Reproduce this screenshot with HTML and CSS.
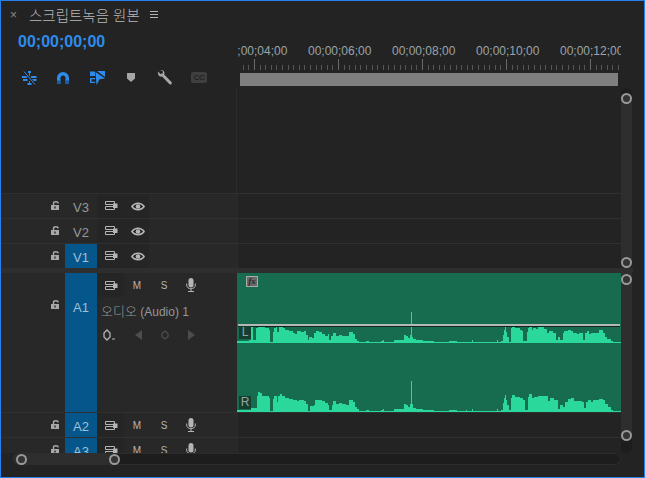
FILE: index.html
```html
<!DOCTYPE html>
<html lang="ko">
<head>
<meta charset="utf-8">
<title>스크립트녹음 원본</title>
<link rel="stylesheet" href="styles.css">
</head>
<body>
<svg class="defs" width="0" height="0">
  <defs>
    <symbol id="lock" viewBox="0 0 9 9"><path d="M2.500 4V2.200C2.500 .4 7 .2 7.200 2.400" fill="none" stroke="currentColor" stroke-width="1.400"/><path fill-rule="evenodd" d="M0 4h8v5H0zM3.300 5.500v2h1.400v-2z" fill="currentColor"/></symbol>
    <symbol id="sync" viewBox="0 0 13 9"><path d="M.5.5h9v3h-9zM.5 5.500h9v3h-9z" fill="none" stroke="currentColor"/><path d="M8 2.500h4.500v4.500H8z" fill="currentColor"/></symbol>
    <symbol id="eye" viewBox="0 0 14 9"><path d="M.8 4.500C4 .2 10 .2 13.200 4.500 10 8.800 4 8.800 .8 4.500z" fill="none" stroke="currentColor" stroke-width="1.400"/><circle cx="7" cy="4.500" r="2.300" fill="currentColor"/></symbol>
    <symbol id="mic" viewBox="0 0 10 14"><rect x="2.500" y="0" width="5" height="9.500" rx="2.500" fill="currentColor"/><path d="M.7 5.500v1.500c0 5 8.600 5 8.600 0V5.500M5 11v2.500M2 13.500h6" fill="none" stroke="currentColor"/></symbol>
  </defs>
</svg>
<main class="panel">
  <header class="tabbar">
    <span class="tab-close">×</span>
    <span class="tab-title">스크립트녹음 원본</span>
    <span class="tab-menu"><i></i><i></i><i></i></span>
  </header>

  <section class="top">
    <div class="controls">
      <div class="timecode">00;00;00;00</div>
      <div class="tools">
        <svg class="tool t-nest" viewBox="0 0 15 14"><path d="M6 0h3v2H6zM7 2h1v3H7zM0 5h5v2H0zM9 5h5.500v2H9zM1 8h4.500v2H1zM10 8h4.500v2H10zM7 10h1v2H7zM5.500 12h4v2h-4z" fill="#2d8ceb"/><path d="M1.500 0l12 14" stroke="#232323" stroke-width="2.600"/><path d="M2 .5l11 13" stroke="#2d8ceb" stroke-width="1"/></svg>
        <svg class="tool t-magnet" viewBox="0 0 12 12"><path d="M0 12V6a6 6 0 0 1 12 0v6H8.500V6a2.500 2.500 0 0 0-5 0v6z" fill="#2d8ceb"/><path d="M0 8.500h3.500V12H0zM8.500 8.500H12V12H8.500z" fill="#1b5c9e"/></svg>
        <svg class="tool t-link" viewBox="0 0 15 14"><path d="M0 .5h5v4.500H0zM0 7h5v1.200H1.500v2.600H5V12H0zM7 0h8v6zM5.500 1l9.500 6.500-5.500.7-3 5.800z" fill="#2d8ceb"/></svg>
        <svg class="tool t-marker" viewBox="0 0 8 9"><path d="M0 0h8v5.500L4 9 0 5.500z" fill="#a6a6a6"/></svg>
        <svg class="tool t-wrench" viewBox="0 0 15 15"><path d="M1 1.500 3.500 4l2-.5.500-2L3.500 0C5.500-.4 7.500 1 7.500 3c0 .6-.1 1-.3 1.400L14.500 12a1.500 1.500 0 0 1-2 2.200L5 6.600C3 7.300.4 5.500 1 1.500z" fill="#a6a6a6"/></svg>
        <span class="tool-cc">CC</span>
      </div>
    </div>
    <div class="ruler">
      <div class="ruler-labels">
        <span>00;00;04;00</span><span>00;00;06;00</span><span>00;00;08;00</span><span>00;00;10;00</span><span>00;00;12;00</span>
      </div>
      <div class="ruler-ticks"></div>
      <div class="zoombar"></div>
    </div>
  </section>

  <section class="stack stack-video">
    <div class="tracks">
      <div class="empty"><div class="empty-head"></div></div>
      <div class="row">
        <div class="head">
          <div class="lock-cell"><svg class="ic-lock"><use href="#lock"/></svg></div>
          <div class="target">V3</div>
          <div class="btns btns-video"><svg class="ic-sync"><use href="#sync"/></svg><svg class="ic-eye"><use href="#eye"/></svg></div>
        </div>
        <div class="lane"></div>
      </div>
      <div class="row">
        <div class="head">
          <div class="lock-cell"><svg class="ic-lock"><use href="#lock"/></svg></div>
          <div class="target">V2</div>
          <div class="btns btns-video"><svg class="ic-sync"><use href="#sync"/></svg><svg class="ic-eye"><use href="#eye"/></svg></div>
        </div>
        <div class="lane"></div>
      </div>
      <div class="row">
        <div class="head">
          <div class="lock-cell"><svg class="ic-lock"><use href="#lock"/></svg></div>
          <div class="target on">V1</div>
          <div class="btns btns-video"><svg class="ic-sync"><use href="#sync"/></svg><svg class="ic-eye"><use href="#eye"/></svg></div>
        </div>
        <div class="lane"></div>
      </div>
    </div>
    <div class="vscroll"><div class="vthumb"><span class="knob"></span><span class="knob"></span></div></div>
  </section>

  <div class="divider"></div>

  <section class="stack stack-audio">
    <div class="tracks">
      <div class="row row-a1">
        <div class="head">
          <div class="lock-cell"><svg class="ic-lock"><use href="#lock"/></svg></div>
          <div class="target on">A1</div>
          <div class="a1-body">
            <div class="btns btns-audio"><span class="b-sync"><svg class="ic-sync"><use href="#sync"/></svg></span><span class="b-m">M</span><span class="b-s">S</span><svg class="ic-mic"><use href="#mic"/></svg></div>
            <div class="a1-name"><span class="ko">오디오</span> (Audio) 1</div>
            <div class="keys">
              <svg class="key-main" viewBox="0 0 12 12"><path d="M4 1l3 3v4L4 11 1 8V4z" fill="none" stroke="#b5b5b5" stroke-width="1.300"/><path d="M9 10h3" stroke="#b5b5b5"/></svg>
              <svg class="key-dim" viewBox="0 0 8 10"><path d="M7 0v10L0 5z" fill="#4d4d4d"/></svg>
              <svg class="key-dim" viewBox="0 0 8 10"><path d="M4 1l3 2.500v3L4 9 1 6.500v-3z" fill="none" stroke="#4d4d4d" stroke-width="1.300"/></svg>
              <svg class="key-dim" viewBox="0 0 8 10"><path d="M1 0v10l7-5z" fill="#4d4d4d"/></svg>
            </div>
          </div>
        </div>
        <div class="clip">
          <svg class="wave" viewBox="3 24 1152 417" preserveAspectRatio="none">
            <path fill="#2bd89b" d="M0 234V228H40V225H45V185H52V225H60V190H65V180H70V176H75V185H88V188H100V195H103V232H110V200H114V188H120V184H124V200H130V184H140V190H148V195H158V198H170V203H178V206H182V199H195V201H205V199H210V210H215V225H220V216H228V220H235V205H240V197H250V202H258V206H268V212H275V206H280V226H286V212H292V205H300V214H308V209H318V213H325V212H338V201H352V206H356V222H362V228H370V231H390V228H400V231H435V228H440V225H443V231H475V225H503V210H510V212H516V218H522V210H525V140H528V215H532V222H540V225H560V228H575V229H595V232H639V228H662V232H690V230H694V232H709V225H712V232H782V225H785V232H795V228H800V210H804V195H807V184H809V200H813V215H818V230H824V190H828V184H838V188H846V190H852V194H858V198H862V228H872V200H876V190H880V182H888V194H892V190H900V193H907V187H925V191H932V205H938V197H952V205H960V225H966V215H972V225H980V205H985V198H995V194H1005V198H1012V203H1022V208H1030V203H1040V225H1046V205H1052V198H1058V208H1066V205H1074V203H1090V196H1100V205H1106V215H1114V222H1124V229H1132V232H1155V234z"/>
            <path fill="#2bd89b" d="M0 441V436H45V430H62V392H65V382H72V385H78V392H98V398H103V439H110V402H114V392H122V410H126V392H132V386H138V392H146V398H158V401H170V405H182V408H190V405H205V408H210V418H216V438H222V422H235V420H238V405H250V404H258V408H268V415H275V420H280V436H288V420H292V408H300V418H308V415H318V418H330V420H338V406H352V410H356V425H362V432H370V438H390V435H400V438H435V435H440V432H443V438H475V432H503V418H510V420H516V425H522V418H525V348H528V418H532V430H540V432H560V435H595V438H639V435H662V438H690V436H694V438H709V432H712V438H782V432H785V438H795V435H800V415H804V400H807V390H809V405H813V420H818V436H824V398H828V390H838V396H852V400H862V405H866V436H876V395H880V388H888V398H895V396H905V393H935V408H942V400H955V404H965V432H972V420H980V425H988V410H995V403H1005V400H1015V408H1037V412H1044V430H1050V412H1056V405H1064V412H1072V406H1090V402H1102V406H1108V416H1116V426H1124V434H1132V438H1155V441z"/>
            <rect x="3" y="231" width="1152" height="3" fill="#2bd89b"/>
            <rect x="3" y="438" width="1152" height="3" fill="#2bd89b"/>
            <rect x="6" y="177" width="1146" height="6" fill="#b3b8b5"/>
            <rect x="6" y="183" width="1146" height="3" fill="#12241d"/>
          </svg>
          <span class="fx">fx</span>
          <span class="chan chan-l">L</span>
          <span class="chan chan-r">R</span>
        </div>
      </div>
      <div class="row">
        <div class="head">
          <div class="lock-cell"><svg class="ic-lock"><use href="#lock"/></svg></div>
          <div class="target on">A2</div>
          <div class="btns btns-audio"><span class="b-sync"><svg class="ic-sync"><use href="#sync"/></svg></span><span class="b-m">M</span><span class="b-s">S</span><svg class="ic-mic"><use href="#mic"/></svg></div>
        </div>
        <div class="lane"></div>
      </div>
      <div class="row">
        <div class="head">
          <div class="lock-cell"><svg class="ic-lock"><use href="#lock"/></svg></div>
          <div class="target on">A3</div>
          <div class="btns btns-audio"><span class="b-sync"><svg class="ic-sync"><use href="#sync"/></svg></span><span class="b-m">M</span><span class="b-s">S</span><svg class="ic-mic"><use href="#mic"/></svg></div>
        </div>
        <div class="lane"></div>
      </div>
    </div>
    <div class="vscroll vscroll-audio"><div class="vthumb"><span class="knob"></span><span class="knob"></span></div></div>
  </section>

  <div class="hscroll"><div class="hthumb"><span class="knob"></span><span class="knob"></span></div></div>
</main>
</body>
</html>
```

FILE: styles.css
```css
* { box-sizing: border-box; }
html, body { margin: 0; padding: 0; }
body { width: 645px; height: 478px; overflow: hidden; background: #232323; font-family: "Liberation Sans", "Noto Sans CJK KR", sans-serif; }
.defs { position: absolute; }
.panel { width: 645px; height: 478px; border: 1px solid #2680eb; background: #232323; display: flex; flex-direction: column; overflow: hidden; }

.tabbar { height: 27px; flex: none; display: flex; align-items: center; color: #b4b4b4; padding-left: 9px; }
.tab-close { width: 8px; font-size: 12px; color: #8a8a8a; line-height: 12px; }
.tab-title { margin-left: 11px; font-family: "Noto Sans CJK KR", sans-serif; font-size: 14.5px; font-weight: 300; line-height: 20px; color: #b8b8b8; }
.tab-menu { margin-left: 10px; width: 8px; display: flex; flex-direction: column; gap: 2px; }
.tab-menu i { display: block; height: 1px; background: #b4b4b4; }

.top { height: 60px; flex: none; display: flex; }
.controls { width: 236px; flex: none; padding-left: 17px; }
.timecode { font-size: 16px; font-weight: 700; color: #2d8ceb; line-height: 20px; margin-top: 4px; }
.tools { margin-top: 18px; height: 15px; display: flex; align-items: center; }
.tool { display: block; flex: none; }
.t-nest { width: 15px; height: 14px; margin-left: 4px; }
.t-magnet { width: 12px; height: 12px; margin-left: 20px; }
.t-link { width: 15px; height: 14px; margin-left: 21px; }
.t-marker { width: 8px; height: 9px; margin-left: 22px; }
.t-wrench { width: 15px; height: 15px; margin-left: 22px; }
.tool-cc { margin-left: 19px; width: 16px; height: 11px; border-radius: 2px; background: #3f3f3f; color: #232323; font-size: 8px; font-weight: 700; line-height: 11px; text-align: center; letter-spacing: -.2px; }

.ruler { width: 383px; margin-left: 1px; overflow: hidden; }
.ruler-labels { display: flex; margin-left: -14px; margin-top: 15px; height: 16px; font-size: 12px; line-height: 16px; color: #9aa3ab; white-space: nowrap; }
.ruler-labels span { flex: 0 0 84px; }
.ruler-ticks { height: 11px; background:
  linear-gradient(#6a6a6a, #6a6a6a) 16px 0 / 1px 11px,
  linear-gradient(#6a6a6a, #6a6a6a) 100px 0 / 1px 11px,
  linear-gradient(#6a6a6a, #6a6a6a) 184px 0 / 1px 11px,
  linear-gradient(#6a6a6a, #6a6a6a) 268px 0 / 1px 11px,
  linear-gradient(#6a6a6a, #6a6a6a) 352px 0 / 1px 11px,
  repeating-linear-gradient(90deg, #565656 -0.8px, #565656 0.2px, transparent 0.2px, transparent 4.8px) 0 6px / 100% 5px;
  background-repeat: no-repeat; }
.zoombar { height: 13px; margin: 3px 3px 0 2px; background: #7f7f7f; }

.stack { display: flex; flex: none; }
.stack-video { height: 180px; }
.stack-audio { height: 180px; overflow: hidden; }
.tracks { width: 620px; flex: none; display: flex; flex-direction: column; }
.empty { flex: 1; }
.empty-head { width: 236px; height: 100%; border-right: 1px solid #2b2b2b; }

.row { height: 25px; flex: none; display: flex; border-top: 1px solid #303030; }
.stack-audio .row:first-child { border-top: 0; }
.row-a1 { height: 139px; }
.head { width: 236px; flex: none; display: flex; background: #282828; color: #a8a8a8; }
.lane { flex: 1; background: #232323; border-left: 1px solid #2b2b2b; }
.lock-cell { width: 64px; flex: none; padding: 7px 0 0 50px; }
.row-a1 .lock-cell { padding-top: 27px; }
.ic-lock { display: block; width: 9px; height: 9px; color: #a8a8a8; }
.target { width: 32px; flex: none; text-align: center; font-size: 13px; line-height: 27px; color: #989898; }
.target.on { background: #05568b; color: #9fc0d8; }
.row-a1 .target { line-height: 70px; height: 100%; }

.btns { height: 100%; display: flex; align-items: center; }
.btns-video { width: 52px; background: #252525; padding-left: 8px; }
.ic-sync { display: block; width: 13px; height: 9px; margin-top: -1px; color: #b5b5b5; flex: none; }
.ic-eye { display: block; width: 14px; height: 9px; margin-left: 13px; margin-top: 1px; color: #b5b5b5; flex: none; }
.btns-audio { height: 24px; color: #b5b5b5; }
.b-sync { width: 27px; height: 100%; background: #252525; padding-left: 8px; display: flex; align-items: center; flex: none; }
.b-sync .ic-sync { margin-top: 0; }
.b-m { width: 26px; text-align: center; font-size: 10px; margin-top: 1px; }
.b-s { width: 28px; text-align: center; font-size: 10px; margin-top: 1px; }
.ic-mic { display: block; width: 10px; height: 14px; margin-left: 8px; margin-top: -1px; color: #b5b5b5; flex: none; }
.a1-body { flex: 1; }
.a1-name { margin: 5px 0 0 4px; font-size: 12px; line-height: 18px; color: #969696; white-space: nowrap; }
.a1-name .ko { font-family: "Noto Sans CJK KR", sans-serif; font-size: 13px; font-weight: 300; }
.keys { margin-top: 8px; display: flex; align-items: center; padding-left: 6px; }
.key-main { width: 12px; height: 12px; display: block; flex: none; }
.key-dim { width: 8px; height: 10px; display: block; flex: none; margin-left: 18px; }
.keys .key-main + .key-dim { margin-left: 20px; }

.clip { flex: 1; background: #176b4e; position: relative; overflow: hidden; }
.wave { position: absolute; left: 0; top: 0; width: 384px; height: 139px; display: block; shape-rendering: crispEdges; }
.fx { position: absolute; left: 9px; top: 3px; width: 12px; height: 11px; border: 1px solid #a8a8a8; background: #6a6a6a; color: #2b2b2b; font-size: 9px; font-weight: 700; line-height: 9px; font-style: italic; font-family: "Liberation Serif", serif; text-align: center; }
.chan { position: absolute; left: 2px; width: 12px; height: 13px; background: #123f30; color: #97a5a0; font-size: 12px; line-height: 13px; text-align: center; }
.chan-l { top: 53px; }
.chan-r { top: 123px; }

.divider { height: 5px; flex: none; background: #2e2e2e; width: 632px; }

.vscroll { width: 11px; flex: none; background: #1d1d1d; border-radius: 6px; padding: 5px 0 0; height: 100%; }
.vscroll-audio { border-radius: 0 0 6px 6px; padding: 1px 0 12px; background: linear-gradient(#2e2e2e 0 1px, #1d1d1d 1px); }
.vthumb { height: 100%; background: linear-gradient(#2e2e2e, #2e2e2e) center / 100% calc(100% - 10px) no-repeat; display: flex; flex-direction: column; justify-content: space-between; align-items: center; }
.vscroll-audio .vthumb { background-position: top; background-size: 100% calc(100% - 5px); }
.knob { display: block; width: 11px; height: 11px; border: 2.500px solid #999; border-radius: 50%; background: #333; flex: none; }

.hscroll { width: 608px; height: 12px; margin-left: 12px; background: #1d1d1d; border-radius: 6px; flex: none; box-shadow: inset 0 0 0 1px #2c2c2c; }
.hthumb { width: 107px; height: 100%; background: linear-gradient(#2e2e2e, #2e2e2e) left / 101px 100% no-repeat; border-radius: 6px 0 0 6px; display: flex; justify-content: space-between; align-items: center; padding-left: 2.500px; }
```
